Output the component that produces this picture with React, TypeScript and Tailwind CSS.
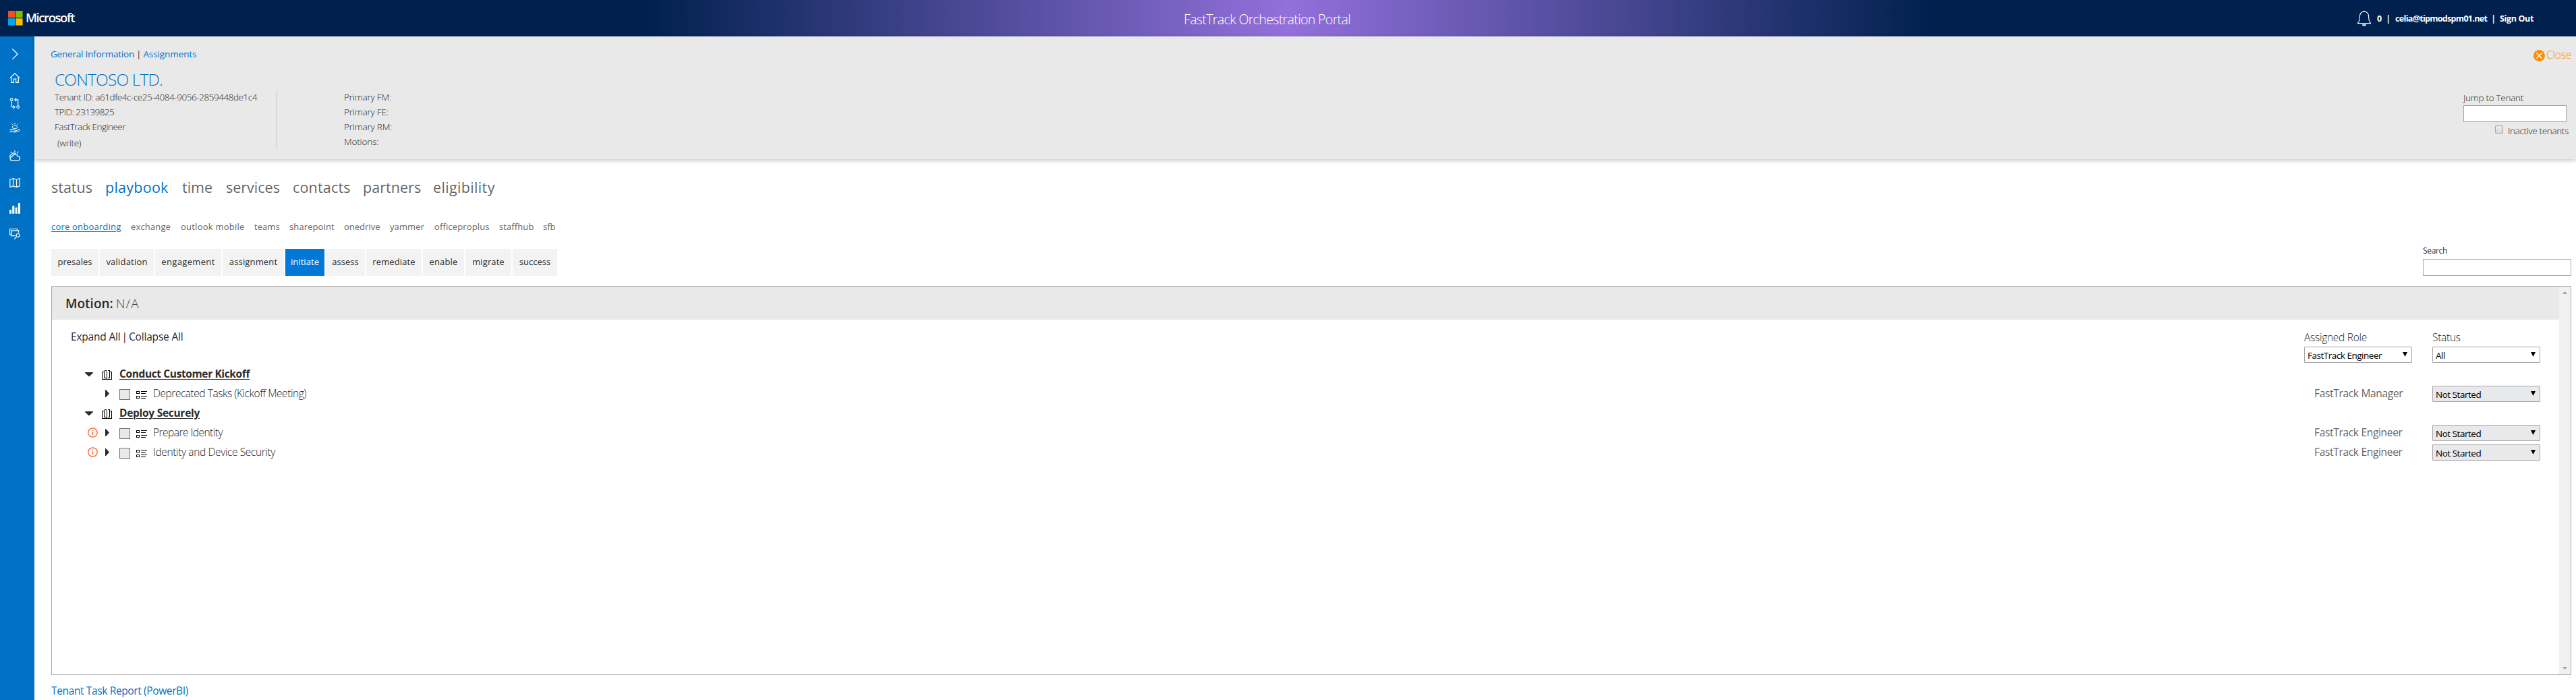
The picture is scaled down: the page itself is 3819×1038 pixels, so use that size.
import React from "react";

function MicrosoftLogo() {
  return (
    <svg className="h-[22px] w-[22px]" viewBox="0 0 22 22">
      <rect width="10.3" height="10.3" fill="#f25022" />
      <rect x="11.3" width="10.3" height="10.3" fill="#7fba00" />
      <rect y="11.3" width="10.3" height="10.3" fill="#00a4ef" />
      <rect x="11.3" y="11.3" width="10.3" height="10.3" fill="#ffb900" />
    </svg>
  );
}

function Bell() {
  return (
    <svg className="h-6 w-[22px]" viewBox="0 0 22 24" fill="none" stroke="#fff" strokeWidth="1.1">
      <path d="M1 19.6h20M1 19.6c2-1.5 3.3-3.8 3.3-9C4.3 5 6.5 2.3 11 2.3s6.700 2.700 6.700 8.300c0 5.200 1.300 7.500 3.300 9" />
      <path d="M9.800 1.600h2.400" />
      <path d="M8 21.300a3 2.200 0 0 0 6 0z" fill="#fff" stroke="none" />
    </svg>
  );
}

function SideIcon({ children }: { children: React.ReactNode }) {
  return (
    <svg className="h-4 w-4 overflow-visible" viewBox="0 0 16 16" fill="none" stroke="#fff" strokeWidth="1.2">
      {children}
    </svg>
  );
}

function Sidebar() {
  return (
    <nav className="flex w-[51px] shrink-0 flex-col bg-[#0072c6] pt-[18px] pl-[14px]">
      <div className="h-[36px]">
        <SideIcon><path d="M4.300.5l7.900 7.700-7.900 7.700" strokeWidth="1.300" /></SideIcon>
      </div>
      <div className="h-[37px]">
        <SideIcon><path d="M.8 8L8 .9 15.200 8M2.700 6.600v7.700h3.600V9.200h3.400v5.100h3.600V6.600" /></SideIcon>
      </div>
      <div className="h-[37px]">
        <SideIcon>
          <circle cx="3.200" cy="2.700" r="1.800" />
          <circle cx="12.700" cy="13.700" r="1.800" />
          <path d="M3.200 4.500v9.200h4.500M5.700 11.400L8 13.700l-2.300 2.300M12.700 11.900V2.900H8.200M10.200.5L7.900 2.900l2.300 2.300" />
        </SideIcon>
      </div>
      <div className="h-[41px]">
        <SideIcon>
          <path d="M5.300 8.300a1.700 1.700 0 0 1 .3-3.300 2.400 2.400 0 0 1 4.600 0 1.700 1.700 0 0 1 .3 3.300zM8 1.800V0M4.800 2.800L3.700 1.500M11.200 2.800l1.100-1.300" strokeWidth="1" />
          <path d="M.3 10.300h2.200v3.400H.3M2.500 10.500h4c2 0 3 .7 3 1.700H6M9.500 11.800l4.600-1.400c1.500-.2 1.700 1 .6 1.500-2 1.200-4 2-6.700 2-2.500 0-4-.4-5.500-.7" strokeWidth="1" />
        </SideIcon>
      </div>
      <div className="h-[40px]">
        <SideIcon>
          <path d="M4.200 15.200a3 3 0 0 1-.1-6 4.200 4.200 0 0 1 7.800-.9 3.500 3.500 0 0 1 .8 6.900zM1.900 11.200C-.3 9.500.5 6.400 3 6.400M3 6.400c1-3 5.500-3.300 6.700-.6M3.300 3.900L1.800 2.100M8 2.600V0M11.200 3.900l2-2.200M11 6l1.500-1" />
        </SideIcon>
      </div>
      <div className="h-[38px]">
        <SideIcon>
          <path d="M.8 3.200L5.500 1.600l5 1.600 4.700-1.600v11.300l-4.700 1.600-5-1.600-4.700 1.600zM5.500 1.600v11.300M10.500 3.200v11.300" />
        </SideIcon>
      </div>
      <div className="h-[38px]">
        <SideIcon>
          <g fill="#fff" stroke="none">
            <rect x="0" y="10" width="3" height="6" rx="1" />
            <rect x="4.200" y="4" width="3.200" height="12" rx="1" />
            <rect x="8.600" y="6.500" width="3" height="9.500" rx="1" opacity=".9" />
            <rect x="12.800" y="0" width="3.200" height="16" rx="1" />
          </g>
        </SideIcon>
      </div>
      <SideIcon>
        <path d="M2.700 9.200H.6V.5h10.900v2M8.300 10.700H3V2.900h10.700v3.200M7.300 15.700l3.200-3.800" />
        <circle cx="12.500" cy="10" r="2.500" />
      </SideIcon>
    </nav>
  );
}

function TopBar() {
  return (
    <header className="relative flex h-[54px] items-center bg-linear-to-r/srgb from-[#00204e] from-25% via-[#9370db] via-50% to-[#00204e] to-75% pl-3">
      <MicrosoftLogo />
      <span className="mb-[3px] ml-[4px] text-[18.5px] leading-[22px] font-semibold tracking-[-1.43px] text-white">Microsoft</span>
      <div className="absolute inset-y-0 left-[1755px] flex items-center pt-[4px] text-[19.5px] font-light tracking-[-0.627px] text-white">
        FastTrack Orchestration Portal
      </div>
      <div className="ml-auto flex items-center pr-[63px] text-[12.5px] font-bold text-white">
        <Bell />
        <div className="flex pt-[3px]">
          <span className="ml-[8px]">0</span>
          <span className="ml-[6px]">|</span>
          <span className="ml-[7px] tracking-[-0.693px]">celia@tipmodspm01.net</span>
          <span className="ml-[6px]">|</span>
          <span className="ml-[6px] tracking-[-0.354px]">Sign Out</span>
        </div>
      </div>
    </header>
  );
}

function TenantHeader() {
  return (
    <section className="relative flex h-[182px] bg-[#e9e9e9] text-[13.5px] font-light text-[#222] shadow-[0_2px_6px_rgba(0,0,0,0.22)]">
      <div className="w-[359px] pl-6">
        <div className="mt-[16px] flex h-5 items-center font-normal text-[#0072c6]">
          <span className="tracking-[-0.213px]">General Information</span>
          <span className="mx-[3px] text-[#333]">|</span>
          <span className="tracking-[-0.094px]">Assignments</span>
        </div>
        <div className="mt-[12px] ml-[6px] flex h-[31px] items-center text-[24.5px] tracking-[-0.848px] whitespace-nowrap text-[#0072c6]">
          <span className="pt-[2px]">CONTOSO LTD.</span>
        </div>
        <div className="ml-[6px] flex flex-col whitespace-nowrap">
          <div className="h-[22px] leading-[22px] tracking-[-0.445px]">Tenant ID: a61dfe4c-ce25-4084-9056-2859448de1c4</div>
          <div className="h-[22px] leading-[22px] tracking-[-0.592px]">TPID: 23139825</div>
          <div className="h-[24px] leading-[22px] tracking-[-0.513px]">FastTrack Engineer</div>
          <div className="ml-[4px] h-[22px] leading-[22px] tracking-[-0.3px]">(write)</div>
        </div>
      </div>
      <div className="mt-[79px] h-[88px] w-px bg-[#c8c8c8]" />
      <div className="mt-[79px] ml-[99px] flex flex-col tracking-[-0.18px]">
        <div className="h-[22px] leading-[22px]">Primary FM:</div>
        <div className="h-[22px] leading-[22px]">Primary FE:</div>
        <div className="h-[22px] leading-[22px]">Primary RM:</div>
        <div className="h-[22px] leading-[22px]">Motions:</div>
      </div>
      <div className="ml-auto flex flex-col">
        <div className="mt-[17px] flex h-[22px] items-center self-end pr-[7px] text-[15.5px] text-[#ff8c00]">
          <svg className="mt-[1px] h-[17px] w-[17px]" viewBox="0 0 17 17">
            <circle cx="8.500" cy="8.500" r="8.500" fill="#ff8c00" />
            <path d="M4.300 4.300l8.400 8.400M12.700 4.300l-8.400 8.400" stroke="#fff" strokeWidth="1.300" />
          </svg>
          <span className="ml-[2px] tracking-[-0.191px]">Close</span>
        </div>
        <div className="mt-[44px] mr-[14px] w-[153px]">
          <div className="h-[19px] leading-[17px] tracking-[-0.272px]">Jump to Tenant</div>
          <div className="h-[25px] w-[153px] border border-[#9caaa9] bg-white" />
          <div className="mt-[2px] flex h-[22px] w-[160px] items-center pl-[47px]">
            <div className="mb-[4px] h-3 w-3 rounded-[2px] border border-[#a3a3a3] bg-linear-to-b from-[#ececec] to-[#d9d9d9]" />
            <span className="ml-[7px] whitespace-nowrap tracking-[-0.342px]">Inactive tenants</span>
          </div>
        </div>
      </div>
    </section>
  );
}

const SECTIONS = [
  { label: "status", cls: "w-[80px]" },
  { label: "playbook", cls: "w-[114px] tracking-[0.25px] text-[#0072c6]" },
  { label: "time", cls: "w-[65px]" },
  { label: "services", cls: "w-[99px]" },
  { label: "contacts", cls: "w-[104px] tracking-[0.18px]" },
  { label: "partners", cls: "w-[104px] tracking-[0.05px]" },
  { label: "eligibility", cls: "w-[100px] tracking-[0.35px]" },
];

const WORKLOADS = [
  { label: "core onboarding", cls: "w-[118px] tracking-[0.2px] text-[#0072c6] underline underline-offset-2" },
  { label: "exchange", cls: "w-[74px] tracking-[0.15px]" },
  { label: "outlook mobile", cls: "w-[109px] tracking-[0.23px]" },
  { label: "teams", cls: "w-[52px] tracking-[0.05px]" },
  { label: "sharepoint", cls: "w-[81px] tracking-[0.11px]" },
  { label: "onedrive", cls: "w-[68px]" },
  { label: "yammer", cls: "w-[66px] tracking-[0.1px]" },
  { label: "officeproplus", cls: "w-[96px] tracking-[0.13px]" },
  { label: "staffhub", cls: "w-[65px] tracking-[0.1px]" },
  { label: "sfb", cls: "w-[24px]" },
];

const STAGES = [
  { label: "presales", cls: "w-[70px] bg-[#f3f3f3] tracking-[0.05px]" },
  { label: "validation", cls: "w-[80px] bg-[#f3f3f3] tracking-[0.2px]" },
  { label: "engagement", cls: "w-[98px] bg-[#f3f3f3] tracking-[0.35px]" },
  { label: "assignment", cls: "w-[91px] bg-[#f3f3f3] tracking-[0.15px]" },
  { label: "initiate", cls: "w-[58px] bg-[#0078d7] text-white tracking-[0.05px]" },
  { label: "assess", cls: "w-[58px] bg-[#f3f3f3]" },
  { label: "remediate", cls: "w-[82px] bg-[#f3f3f3] tracking-[0.12px]" },
  { label: "enable", cls: "w-[61px] bg-[#f3f3f3] tracking-[0.12px]" },
  { label: "migrate", cls: "w-[68px] bg-[#f3f3f3] tracking-[0.1px]" },
  { label: "success", cls: "w-[66px] bg-[#f3f3f3]" },
];

function Select({ value, bg }: { value: string; bg: string }) {
  return (
    <div className={`flex h-6 w-40 items-center justify-between rounded-[1px] border border-[#a6a6a6] pr-[6px] pl-1 text-[13.5px] text-black ${bg}`}>
      <span className="pt-[2px] tracking-[-0.48px] whitespace-nowrap">{value}</span>
      <svg className="mb-px h-[7px] w-[7px]" viewBox="0 0 7 7"><path d="M0 0h7L3.500 7z" fill="#000" /></svg>
    </div>
  );
}

function Book() {
  return (
    <svg className="h-[15px] w-[15px]" viewBox="0 0 15 15" fill="none" stroke="#000" shapeRendering="crispEdges">
      <path d="M3.500.5h3M8.500.5h3M3.500.5v11h3M11.500.5v11h-3M7.500 1v13M3 2.500H.5v11h14v-11H12" />
    </svg>
  );
}

function ListIcon() {
  return (
    <svg className="h-[13px] w-4" viewBox="0 0 16 13" fill="none" stroke="#000" shapeRendering="crispEdges">
      <rect x=".5" y="1.500" width="4" height="3" />
      <rect x=".5" y="8.500" width="4" height="3" />
      <path d="M7 1.500h9M7 4.500h7M7 8.500h9M7 11.500h7" />
    </svg>
  );
}

function Info() {
  return (
    <svg className="h-[15px] w-[15px]" viewBox="0 0 15 15">
      <circle cx="7.500" cy="7.500" r="6.700" fill="none" stroke="#f4622a" strokeWidth="1.300" />
      <path d="M7.500 6.200v5M7.500 3.500v1.500" stroke="#f4622a" strokeWidth="1.300" />
    </svg>
  );
}

function GroupRow({ title, cls }: { title: string; cls: string }) {
  return (
    <div className="flex h-[29px] items-center pl-[49px]">
      <svg className="mt-px h-[7px] w-[12px]" viewBox="0 0 12 7"><path d="M0 0h12v1L6 6.500 0 1z" fill="#2b2b2b" /></svg>
      <div className="mt-[4px] ml-[13px]"><Book /></div>
      <span className={`ml-[11px] text-[15.5px] font-bold text-[#2b2b2b] underline underline-offset-[2px] ${cls}`}>{title}</span>
    </div>
  );
}

function TaskRow({ title, cls, role, alert }: { title: string; cls: string; role: string; alert?: boolean }) {
  return (
    <div className="flex h-[29px] items-center pl-[53px]">
      <div className="w-[26px]">{alert && <Info />}</div>
      <svg className="h-[11px] w-[6px]" viewBox="0 0 6 11"><path d="M0 0h1l5 5.500L1 11H0z" fill="#2b2b2b" /></svg>
      <div className="mt-[3px] ml-[15px] h-4 w-4 border border-[#707070] bg-[#e8e9eb]" />
      <div className="mt-[4px] ml-[9px]"><ListIcon /></div>
      <span className={`ml-[9px] text-[15.5px] font-light text-[#222] ${cls}`}>{title}</span>
      <span className="ml-auto w-[175px] text-[15.5px] tracking-[-0.32px] text-[#666]">{role}</span>
      <div className="mt-px mr-[28px]"><Select value="Not Started" bg="bg-[#e8e9eb]" /></div>
    </div>
  );
}

function Playbook() {
  return (
    <div className="mt-[15px] flex h-[577px] w-[3736px] border border-[#ababab]">
      <div className="flex flex-1 flex-col">
        <div className="flex h-[49px] items-center bg-[#e9e9e9] pt-[2px] pl-5 text-[19px]">
          <span className="font-semibold text-[#2b2b2b]">Motion:</span>
          <span className="ml-[4px] font-light tracking-[1.1px] text-[#444]">N/A</span>
        </div>
        <div className="flex h-[68px] pt-[15px] text-[15.5px] text-[#2b2b2b]">
          <div className="flex h-[22px] items-center pl-[28px] whitespace-nowrap">
            <span className="tracking-[-0.2px]">Expand All</span>
            <span className="mx-[2px]">|</span>
            <span className="tracking-[-0.18px]">Collapse All</span>
          </div>
          <div className="ml-auto flex gap-[30px] pr-[28px] font-light">
            <div className="w-40">
              <div className="h-[25px] leading-[22px] tracking-[-0.273px]">Assigned Role</div>
              <div className="font-normal"><Select value="FastTrack Engineer" bg="bg-white" /></div>
            </div>
            <div className="w-40">
              <div className="h-[25px] leading-[22px] tracking-[-0.273px]">Status</div>
              <div className="font-normal"><Select value="All" bg="bg-white" /></div>
            </div>
          </div>
        </div>
        <div className="-mt-[2px]">
          <GroupRow title="Conduct Customer Kickoff" cls="tracking-[-0.38px]" />
          <TaskRow title="Deprecated Tasks (Kickoff Meeting)" cls="tracking-[-0.459px]" role="FastTrack Manager" />
          <GroupRow title="Deploy Securely" cls="tracking-[-0.281px]" />
          <TaskRow title="Prepare Identity" cls="tracking-[-0.525px]" role="FastTrack Engineer" alert />
          <TaskRow title="Identity and Device Security" cls="tracking-[-0.383px]" role="FastTrack Engineer" alert />
        </div>
      </div>
      <div className="flex w-[17px] flex-col items-center justify-between bg-[#f0f0f0] py-[7px]">
        <svg className="h-1 w-[7px]" viewBox="0 0 7 4"><path d="M3.500 0L7 4H0z" fill="#a3a3a3" /></svg>
        <svg className="h-1 w-[7px]" viewBox="0 0 7 4"><path d="M0 0h7L3.500 4z" fill="#a3a3a3" /></svg>
      </div>
    </div>
  );
}

export default function App() {
  return (
    <div className="flex h-[1038px] w-[3819px] flex-col overflow-hidden bg-white font-['Open_Sans',sans-serif]">
      <TopBar />
      <div className="flex flex-1">
        <Sidebar />
        <main className="flex flex-1 flex-col">
          <TenantHeader />
          <div className="flex flex-1 flex-col pl-[25px]">
            <div className="mt-[27px] flex h-[30px] items-center text-[21.5px] text-[#666]">
              {SECTIONS.map((s) => <span key={s.label} className={s.cls}>{s.label}</span>)}
            </div>
            <div className="mt-[34px] flex h-5 items-center text-[13px] text-[#666]">
              {WORKLOADS.map((s) => <span key={s.label} className={`whitespace-nowrap ${s.cls}`}>{s.label}</span>)}
            </div>
            <div className="mt-[18px] flex h-[44px]">
              <div className="mt-[4px] flex h-[40px] gap-[2px] text-[13px] text-[#2b2b2b]">
                {STAGES.map((s) => (
                  <div key={s.label} className={`flex items-center justify-center ${s.cls}`}>{s.label}</div>
                ))}
              </div>
              <div className="mr-[7px] ml-auto w-[220px] text-[12px] text-[#2b2b2b]">
                <div className="-mt-[2px] h-[21px] leading-[18px] tracking-[-0.333px]">Search</div>
                <div className="h-[25px] border border-[#ababab] bg-white" />
              </div>
            </div>
            <Playbook />
            <div className="mt-[11px] flex h-[26px] items-center text-[15.5px] tracking-[-0.37px] text-[#0072c6]">
              Tenant Task Report (PowerBI)
            </div>
          </div>
        </main>
      </div>
    </div>
  );
}
